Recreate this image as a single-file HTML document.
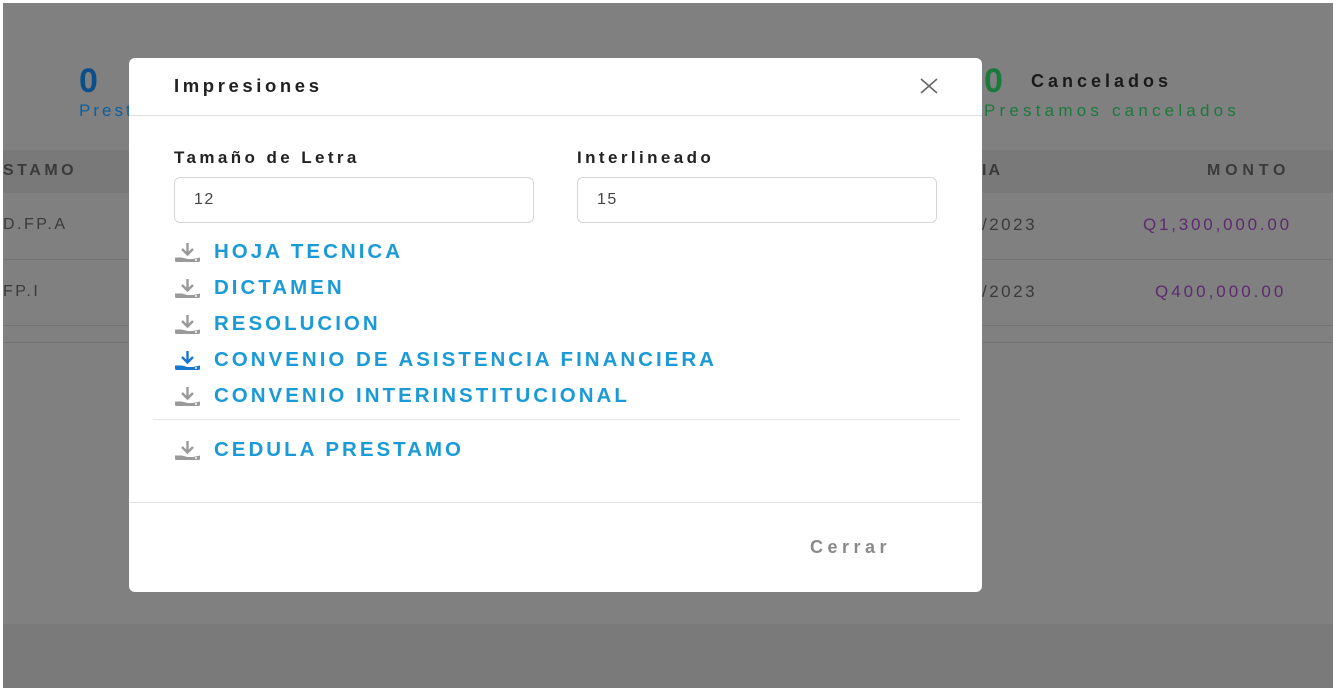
<!DOCTYPE html>
<html><head><meta charset="utf-8"><style>
*{margin:0;padding:0;box-sizing:border-box}
body{width:1338px;height:693px;background:#fff;font-family:"Liberation Sans",sans-serif;position:relative;overflow:hidden}
.bg{position:absolute;left:3px;top:3px;width:1330px;height:685px;background:#808080}
.abs{position:absolute;white-space:nowrap}
.modal{position:absolute;left:129px;top:58px;width:853px;height:534px;background:#fff;border-radius:6px}
.lnk{position:absolute;left:45px;color:#1a9ad6;font-size:20.5px;letter-spacing:3px;font-weight:bold}
.ic{position:absolute;left:45px;width:27px;height:20px}
.inp{position:absolute;top:119px;width:360px;height:46px;border:1px solid #d5d5d5;border-radius:6px;font-size:16px;color:#444;padding:13px 0 0 19px;letter-spacing:1.5px}
.lbl{position:absolute;top:90px;font-size:17px;color:#222;font-weight:bold;letter-spacing:3.4px}
</style></head><body>
<div class="bg"></div>
<div class="abs" style="left:3px;top:150px;width:1330px;height:43px;background:#797979"></div>
<div class="abs" style="left:3px;top:259px;width:1330px;height:1px;background:#747474"></div>
<div class="abs" style="left:3px;top:325px;width:1330px;height:1px;background:#747474"></div>
<div class="abs" style="left:3px;top:342px;width:1330px;height:1px;background:#747474"></div>
<div class="abs" style="left:3px;top:624px;width:1330px;height:64px;background:#7a7a7a"></div>
<div class="abs" style="left:79px;top:62px;font-size:34px;font-weight:bold;color:#0a4f8a">0</div>
<div class="abs" style="left:79px;top:101px;font-size:17px;color:#0d5fa0;letter-spacing:3px">Prest</div>
<div class="abs" style="left:3px;top:162px;font-size:16px;font-weight:bold;color:#3a3a3a;letter-spacing:3.5px">STAMO</div>
<div class="abs" style="left:3px;top:216px;font-size:16px;color:#3a3a3a;letter-spacing:2.5px">D.FP.A</div>
<div class="abs" style="left:3px;top:283px;font-size:16px;color:#3a3a3a;letter-spacing:2.5px">FP.I</div>
<div class="abs" style="left:984px;top:62px;font-size:34px;font-weight:bold;color:#1a7a3c">0</div>
<div class="abs" style="left:1031px;top:71px;font-size:18px;font-weight:bold;color:#1a1a1a;letter-spacing:4px">Cancelados</div>
<div class="abs" style="left:984px;top:101px;font-size:17px;color:#1a7a3c;letter-spacing:4.2px">Prestamos cancelados</div>
<div class="abs" style="left:982px;top:162px;font-size:16px;font-weight:bold;color:#3a3a3a;letter-spacing:2px">IA</div>
<div class="abs" style="left:1207px;top:162px;font-size:16px;font-weight:bold;color:#3a3a3a;letter-spacing:4.8px">MONTO</div>
<div class="abs" style="left:982px;top:215px;font-size:17px;color:#3a3a3a;letter-spacing:2.5px">/2023</div>
<div class="abs" style="left:982px;top:282px;font-size:17px;color:#3a3a3a;letter-spacing:2.5px">/2023</div>
<div class="abs" style="left:1143px;top:215px;font-size:17px;color:#5e2a6e;letter-spacing:2.8px">Q1,300,000.00</div>
<div class="abs" style="left:1155px;top:282px;font-size:17px;color:#5e2a6e;letter-spacing:3px">Q400,000.00</div>

<div class="modal">
 <div class="abs" style="left:45px;top:17px;font-size:18.5px;font-weight:bold;color:#222;letter-spacing:3.6px">Impresiones</div>
 <svg class="abs" style="left:790px;top:20px" width="20" height="16" viewBox="0 0 20 16"><path d="M2 1L18 15M18 1L2 15" stroke="#666" stroke-width="1.6"/></svg>
 <div class="abs" style="left:0;top:57px;width:853px;height:1px;background:#ddd"></div>
 <div class="lbl" style="left:45px">Tamaño de Letra</div>
 <div class="lbl" style="left:448px">Interlineado</div>
 <div class="inp" style="left:45px">12</div>
 <div class="inp" style="left:448px">15</div>
 <svg width="0" height="0" style="position:absolute"><defs><g id="d"><path d="M13.5 1V12M8 7L13.5 12.5L19 7" fill="none" stroke="currentColor" stroke-width="2.4"/><path d="M1 15.5H8L13.5 17H19 L26 15.5V18.5C26 19.5 25.5 20 24.5 20H2.5C1.5 20 1 19.5 1 18.5Z" fill="currentColor"/><circle cx="22" cy="18" r="1" fill="#fff"/></g></defs></svg>
 <svg class="ic" style="top:184px;color:#9a9a9a" viewBox="0 0 27 20"><use href="#d"/></svg>
 <div class="lnk" style="left:85px;top:182px">HOJA TECNICA</div>
 <svg class="ic" style="top:220px;color:#9a9a9a" viewBox="0 0 27 20"><use href="#d"/></svg>
 <div class="lnk" style="left:85px;top:218px">DICTAMEN</div>
 <svg class="ic" style="top:256px;color:#9a9a9a" viewBox="0 0 27 20"><use href="#d"/></svg>
 <div class="lnk" style="left:85px;top:254px">RESOLUCION</div>
 <svg class="ic" style="top:292px;color:#1876d1" viewBox="0 0 27 20"><use href="#d"/></svg>
 <div class="lnk" style="left:85px;top:290px">CONVENIO DE ASISTENCIA FINANCIERA</div>
 <svg class="ic" style="top:328px;color:#9a9a9a" viewBox="0 0 27 20"><use href="#d"/></svg>
 <div class="lnk" style="left:85px;top:326px">CONVENIO INTERINSTITUCIONAL</div>
 <div class="abs" style="left:24px;top:361px;width:807px;height:1px;background:#e5e5e5"></div>
 <svg class="ic" style="top:382px;color:#9a9a9a" viewBox="0 0 27 20"><use href="#d"/></svg>
 <div class="lnk" style="left:85px;top:380px">CEDULA PRESTAMO</div>
 <div class="abs" style="left:0;top:444px;width:853px;height:1px;background:#e2e2e2"></div>
 <div class="abs" style="left:681px;top:479px;font-size:18px;font-weight:bold;color:#8a8a8a;letter-spacing:4.5px">Cerrar</div>
</div>
</body></html>
